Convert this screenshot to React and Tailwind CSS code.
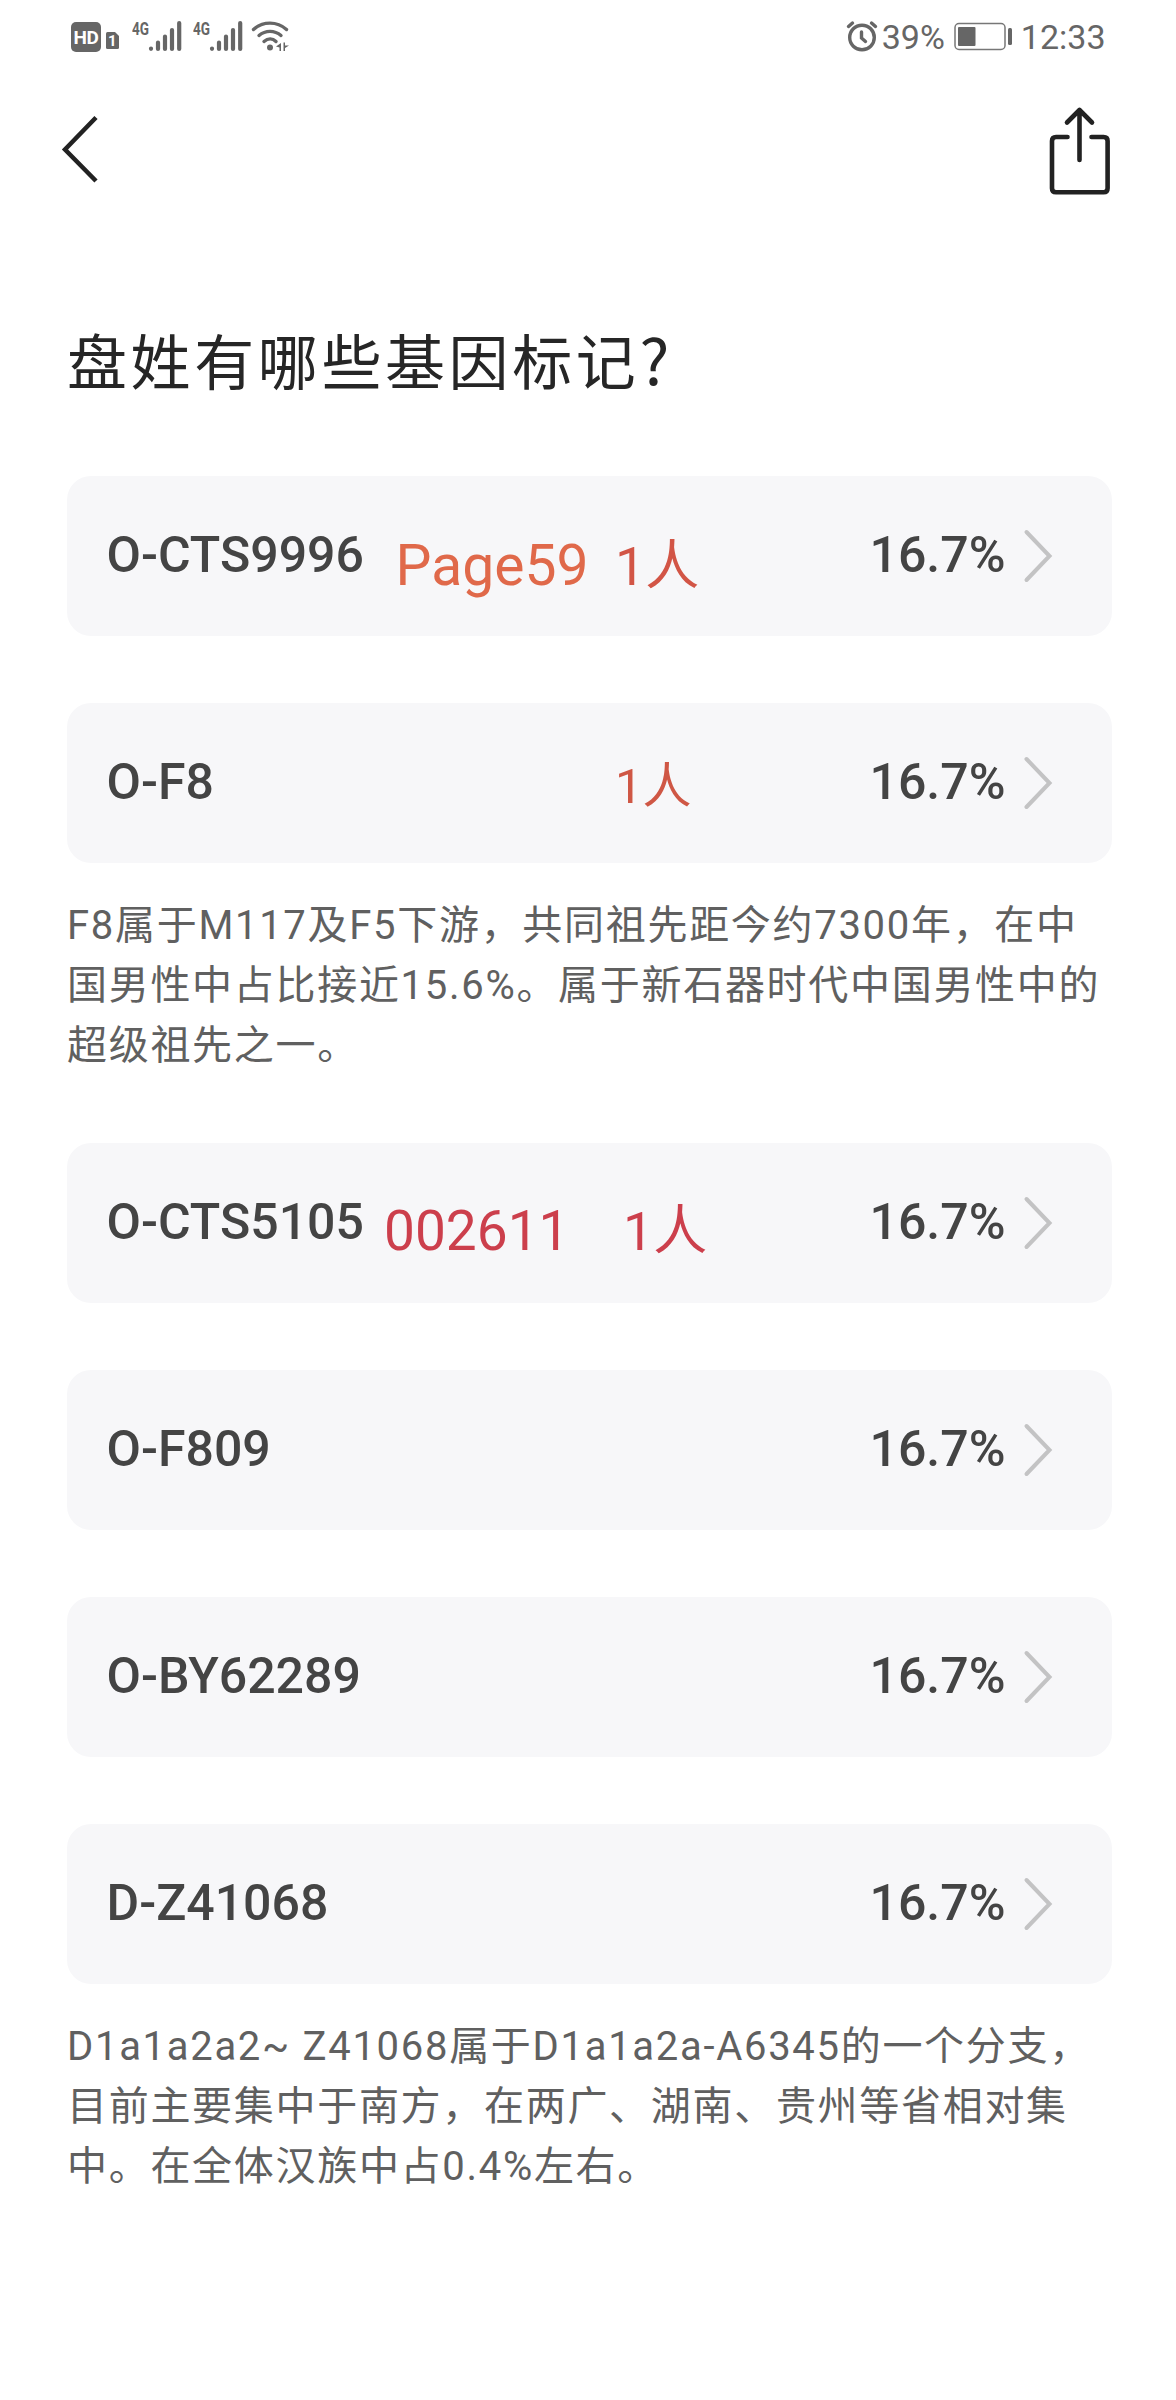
import React from 'react';

const markers = [
  {
    id: 'O-CTS9996',
    percent: '16.7%',
    notes: [
      { text: 'Page59', className: 'left-[328.5px] top-[61px] text-[57px] text-[#e0694a]' },
      { text: '1人', className: 'left-[548px] top-[64px] text-[54px] text-[#d25546]' }
    ]
  },
  {
    id: 'O-F8',
    percent: '16.7%',
    notes: [{ text: '1人', className: 'left-[548px] top-[59px] text-[49px] text-[#cf5745]' }],
    description: [
      'F8属于M117及F5下游，共同祖先距今约7300年，在中',
      '国男性中占比接近15.6%。属于新石器时代中国男性中的',
      '超级祖先之一。'
    ]
  },
  {
    id: 'O-CTS5105',
    percent: '16.7%',
    notes: [
      { text: '002611', className: 'left-[317px] top-[60.5px] text-[55px] text-[#cc3f4c]' },
      { text: '1人', className: 'left-[556px] top-[62px] text-[54px] text-[#cc3f4c]' }
    ]
  },
  { id: 'O-F809', percent: '16.7%' },
  { id: 'O-BY62289', percent: '16.7%' },
  {
    id: 'D-Z41068',
    percent: '16.7%',
    description: [
      'D1a1a2a2~ Z41068属于D1a1a2a-A6345的一个分支，',
      '目前主要集中于南方，在两广、湖南、贵州等省相对集',
      '中。在全体汉族中占0.4%左右。'
    ]
  }
];

const SignalIcon = () => (
  <svg className="w-[50px] h-[34px]" viewBox="0 0 50 34" fill="none" stroke="#666" strokeWidth="4.2" strokeLinecap="round">
    <text x="0" y="16.500" fontSize="18.500" fontWeight="700" fill="#666" stroke="none" textLength="17" lengthAdjust="spacingAndGlyphs">4G</text>
    <path d="M19 30.500v.3M26 31v-6.500M33 31v-12.500M40 31v-19M47.200 31V5" />
  </svg>
);

const WifiIcon = () => (
  <svg className="-ml-[3px] w-[40px] h-[34px]" viewBox="0 0 40 34" fill="none" stroke="#666" strokeWidth="3.4" strokeLinecap="round">
    <path d="M2.500 11.500C12 3 26 3 35.500 11.500" />
    <path d="M8 17.500C14.500 12 23.500 12 30 17.500" />
    <path d="M13 23.500C17 20 21.500 20 25 23.500" />
    <circle cx="19" cy="29.500" r="3" fill="#666" stroke="none" />
    <path d="M30 25v8h-1.500v-3.500l-3.500-1z M32.500 24.500v8.500h1.500v-3l4-2.500h-4v-3z" fill="#666" stroke="none" />
  </svg>
);

const AlarmIcon = () => (
  <svg className="w-[32px] h-[34px]" viewBox="0 0 32 34" fill="none" stroke="#666" strokeWidth="3.400" strokeLinecap="round">
    <circle cx="16" cy="19.500" r="12.300" />
    <path d="M2.500 8.500L6.500 5M29.500 8.500L25.500 5M15.500 14V20L19.500 23.500" />
  </svg>
);

const BatteryIcon = () => (
  <svg className="w-[60px] h-[34px]" viewBox="0 0 60 34">
    <rect x="1" y="5.500" width="50" height="26" rx="4" fill="none" stroke="#777" strokeWidth="1.500" />
    <rect x="4" y="9" width="17.500" height="19" rx="1" fill="#666" />
    <rect x="54" y="10" width="4" height="17" rx="1.500" fill="#666" />
  </svg>
);

const StatusBar = () => (
  <div className="flex items-start justify-between h-[72px] pt-[18px] pl-[71px] pr-[70.5px] text-[#666]">
    <div className="flex items-start">
      <div className="mt-1 flex h-[30px] w-[30px] items-center justify-center rounded-[5px] bg-[#666] text-[19px] font-bold leading-none tracking-[-0.5px] text-white">
        HD
      </div>
      <svg className="ml-[5px] mt-3.5 h-[17px] w-[13px]" viewBox="0 0 13 17">
        <path d="M1.500 0H9l4 4v11.500q0 1.500-1.500 1.500h-10Q0 17 0 15.500v-14Q0 0 1.500 0z" fill="#666" />
        <text x="2" y="14" fontSize="15" fontWeight="700" fill="#fff">1</text>
      </svg>
      <div className="ml-[13px] flex gap-[11px]">
        <SignalIcon />
        <SignalIcon />
        <WifiIcon />
      </div>
    </div>
    <div className="flex items-start text-[34px] leading-[38px]">
      <AlarmIcon />
      <span className="ml-1">39%</span>
      <span className="ml-[9px]">
        <BatteryIcon />
      </span>
      <span className="ml-[7px]">12:33</span>
    </div>
  </div>
);

const NavBar = () => (
  <div className="flex items-start justify-between pl-[60px] pr-[64px] pt-[32px]">
    <button aria-label="返回" className="mt-2">
      <svg className="h-[72px] w-[40px]" viewBox="0 0 40 72" fill="none" stroke="#222" strokeWidth="4.500">
        <path d="M36 5.500L5 37.500L36 69" />
      </svg>
    </button>
    <button aria-label="分享">
      <svg
        className="h-[92px] w-[64px]"
        viewBox="0 0 64 92"
        fill="none"
        stroke="#222"
        strokeWidth="4.600"
        strokeLinecap="round"
        strokeLinejoin="round"
      >
        <path d="M19.500 33H8q-4 0-4 4V84.300q0 4 4 4H55.600q4 0 4-4V37q0-4-4-4H43.500" />
        <path d="M31.500 56V6M19 18.500L31.500 6L44 18.500" />
      </svg>
    </button>
  </div>
);

const MarkerCard = ({ marker }) => (
  <div className="relative flex h-[160px] items-center justify-between rounded-[24px] bg-[#f7f7f9] pl-[39.5px] pr-[59px] text-[50px] font-medium text-[#444]">
    <span className="-mt-px">{marker.id}</span>
    <div className="flex items-center">
      <span className="-mt-px">{marker.percent}</span>
      <svg className="ml-[17.5px] h-[54px] w-[30px]" viewBox="0 0 30 54" fill="none" stroke="#c3c3c4" strokeWidth="4" strokeLinecap="round">
        <path d="M3.500 3L26.500 27L3.500 51" />
      </svg>
    </div>
    {/* Notes laid over the card */}
    {marker.notes?.map((note) => (
      <span key={note.text} className={`absolute whitespace-nowrap font-normal leading-none ${note.className}`}>
        {note.text}
      </span>
    ))}
  </div>
);

const App = () => (
  <div className="h-[2400px] w-[1176px] overflow-hidden bg-white font-['Roboto','Noto_Sans_CJK_SC',sans-serif]">
    <StatusBar />
    <NavBar />

    <main className="pl-[67px] pr-[64px]">
      <h1 className="mt-[129px] h-[80px] whitespace-nowrap text-[60px] leading-[80px] tracking-[3.6px] text-[#262626]">
        盘姓有哪些基因标记
        <span className="font-['Noto_Sans_CJK_SC',sans-serif] text-[63px] leading-none">?</span>
      </h1>

      <div className="mt-[71px]">
        {markers.map((marker) => (
          <section key={marker.id} className="mb-[67px]">
            <MarkerCard marker={marker} />
            {marker.description && (
              <div className="pt-[33px] text-[40px] leading-[60px] tracking-[1.7px] text-[#606060]">
                {marker.description.map((line) => (
                  <p key={line} className="whitespace-nowrap">
                    {line}
                  </p>
                ))}
              </div>
            )}
          </section>
        ))}
      </div>
    </main>
  </div>
);

export default App;
